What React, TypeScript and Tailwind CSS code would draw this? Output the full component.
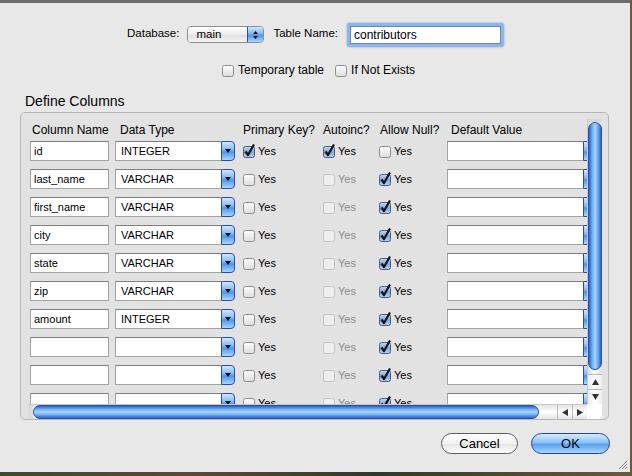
import React from "react";

const font = { fontFamily: '"Liberation Sans", Arial, sans-serif' };

type Row = {
  name: string;
  type: string;
  pk: boolean;
  ai: boolean;
  aiEnabled: boolean;
  nul: boolean;
};

const rows: Row[] = [
  { name: "id", type: "INTEGER", pk: true, ai: true, aiEnabled: true, nul: false },
  { name: "last_name", type: "VARCHAR", pk: false, ai: false, aiEnabled: false, nul: true },
  { name: "first_name", type: "VARCHAR", pk: false, ai: false, aiEnabled: false, nul: true },
  { name: "city", type: "VARCHAR", pk: false, ai: false, aiEnabled: false, nul: true },
  { name: "state", type: "VARCHAR", pk: false, ai: false, aiEnabled: false, nul: true },
  { name: "zip", type: "VARCHAR", pk: false, ai: false, aiEnabled: false, nul: true },
  { name: "amount", type: "INTEGER", pk: false, ai: false, aiEnabled: false, nul: true },
  { name: "", type: "", pk: false, ai: false, aiEnabled: false, nul: true },
  { name: "", type: "", pk: false, ai: false, aiEnabled: false, nul: true },
  { name: "", type: "", pk: false, ai: false, aiEnabled: false, nul: true },
];

const Check = ({ checked, disabled }: { checked?: boolean; disabled?: boolean }) => (
  <svg width="13" height="14" viewBox="0 0 13 14" className="shrink-0 overflow-visible">
    <defs>
      <linearGradient id="cbOff" x1="0" y1="0" x2="0" y2="1">
        <stop offset="0" stopColor="#ffffff" />
        <stop offset="1" stopColor="#dcdcdc" />
      </linearGradient>
      <linearGradient id="cbOn" x1="0" y1="0" x2="0" y2="1">
        <stop offset="0" stopColor="#c9ddf7" />
        <stop offset="0.5" stopColor="#7ea8e0" />
        <stop offset="1" stopColor="#b6d2f5" />
      </linearGradient>
    </defs>
    <rect
      x="0.5"
      y="2.5"
      width="11"
      height="11"
      rx="2"
      fill={disabled ? "#efefef" : checked ? "url(#cbOn)" : "url(#cbOff)"}
      stroke={disabled ? "#c4c4c4" : checked ? "#4a5f80" : "#8d8d8d"}
    />
    {checked && (
      <path d="M2.5 7.5 L5 11 L11 0.5" fill="none" stroke="#111" strokeWidth="2.2" strokeLinejoin="round" />
    )}
  </svg>
);

const CheckYes = ({ checked, disabled }: { checked?: boolean; disabled?: boolean }) => (
  <div className="flex items-center gap-[2px]">
    <Check checked={checked} disabled={disabled} />
    <span className={`text-[11px] ${disabled ? "text-[#8c8c8c]" : "text-black"}`}>Yes</span>
  </div>
);

const Field = ({ value, width }: { value: string; width: string }) => (
  <div
    className={`${width} h-[20px] bg-white border border-[#a4a4a4] border-t-[#7e7e7e] flex items-center pl-[3px] text-[11px] text-black shrink-0`}
  >
    {value}
  </div>
);

const ComboButton = () => (
  <div className="w-[14px] h-[20px] shrink-0 rounded-r-[4px] border border-[#2a4f9c] bg-[linear-gradient(to_bottom,#d3e7ff,#7db6f4_45%,#4c94ea_55%,#a9d6ff)] flex items-center justify-center">
    <svg width="6" height="4" viewBox="0 0 6 4">
      <path d="M0 0 L6 0 L3 4 Z" fill="#111" />
    </svg>
  </div>
);

const Combo = ({ value }: { value: string }) => (
  <div className="flex shrink-0">
    <div className="w-[106px] h-[20px] bg-white border border-[#a4a4a4] border-t-[#7e7e7e] border-r-0 flex items-center pl-[5px] text-[11px] text-black">
      {value}
    </div>
    <ComboButton />
  </div>
);

const Arrow = ({ dir }: { dir: "up" | "down" | "left" | "right" }) => {
  const d =
    dir === "up"
      ? "M0 6 L7 6 L3.5 0 Z"
      : dir === "down"
      ? "M0 0 L7 0 L3.5 6 Z"
      : dir === "left"
      ? "M6 0 L6 7 L0 3.5 Z"
      : "M0 0 L0 7 L6 3.5 Z";
  const vert = dir === "up" || dir === "down";
  return (
    <svg width={vert ? 7 : 6} height={vert ? 6 : 7} viewBox={vert ? "0 0 7 6" : "0 0 6 7"}>
      <path d={d} fill="#333" />
    </svg>
  );
};

export default function App() {
  return (
    <div className="w-[632px] h-[476px] overflow-hidden bg-[linear-gradient(to_right,#3c4a2c,#5b4a3a_30%,#2f3a26_60%,#6a5a3c)]" style={font}>
      <div className="relative w-[630px] h-[472px] bg-[#e8e8e8] border-t-[3px] border-t-[#6d6d6d] flex flex-col">
        {/* top row */}
        <div className="flex items-center h-[23px] mt-[20px] pl-[127px]">
          <span className="text-[11.5px] text-black -mt-[2px]">Database:</span>
          <div className="ml-[8px] flex w-[77px] h-[17px] rounded-[4px] border border-[#8f8f8f] overflow-hidden">
            <div className="flex-1 bg-[linear-gradient(to_bottom,#ffffff,#ececec_50%,#dedede_51%,#f4f4f4)] flex items-center pl-[8px] text-[11.5px] text-black">
              main
            </div>
            <div className="w-[16px] border-l border-[#2a4f9c] bg-[linear-gradient(to_bottom,#d3e7ff,#7db6f4_45%,#4c94ea_55%,#a9d6ff)] flex flex-col items-center justify-center gap-[2px]">
              <svg width="5" height="3" viewBox="0 0 5 3">
                <path d="M0 3 L5 3 L2.5 0 Z" fill="#111" />
              </svg>
              <svg width="5" height="3" viewBox="0 0 5 3">
                <path d="M0 0 L5 0 L2.5 3 Z" fill="#111" />
              </svg>
            </div>
          </div>
          <span className="ml-[9px] text-[11.5px] text-black -mt-[2px]">Table Name:</span>
          <div className="ml-[9px] w-[157px] h-[24px] rounded-[3px] bg-[#8db6ec] p-[3px] shadow-[0_0_2px_#6d9ee0]">
            <div className="w-full h-full bg-white border border-[#6f87a8] flex items-center pl-[3px] text-[12px] text-black">
              contributors
            </div>
          </div>
        </div>

        {/* options row */}
        <div className="flex items-center h-[14px] mt-[17px] pl-[222px] gap-[3px]">
          <Check />
          <span className="text-[12px] text-black">Temporary table</span>
          <span className="w-[5px]" />
          <Check />
          <span className="text-[12px] text-black">If Not Exists</span>
        </div>

        <div className="mt-[16px] pl-[25px] h-[17px] leading-[17px] text-[14px] text-black">Define Columns</div>

        {/* group box */}
        <div className="mt-[2px] ml-[20px] w-[589px] h-[308px] border border-[#b7b7b7] rounded-[5px] bg-[#e2e2e2] pt-[6px] pl-[7px]">
          <div className="w-[574px] h-[300px] flex flex-col">
            <div className="flex h-[285px]">
              <div className="w-[559px] h-[285px] overflow-hidden shrink-0">
                <div className="flex h-[22px] pt-[2px] text-[12px] text-black whitespace-nowrap">
                  <div className="w-[89px] pl-[4px] shrink-0">Column Name</div>
                  <div className="w-[126px] pl-[3px] shrink-0">Data Type</div>
                  <div className="w-[80px] shrink-0">Primary Key?</div>
                  <div className="w-[57px] shrink-0">Autoinc?</div>
                  <div className="w-[71px] shrink-0">Allow Null?</div>
                  <div className="shrink-0">Default Value</div>
                </div>
                {rows.map((r, i) => (
                  <div key={i} className="flex h-[28px] pl-[2px] whitespace-nowrap">
                    <div className="w-[85px] h-[20px] shrink-0">
                      <Field value={r.name} width="w-[79px]" />
                    </div>
                    <div className="w-[128px] h-[20px] shrink-0">
                      <Combo value={r.type} />
                    </div>
                    <div className="w-[80px] h-[20px] flex items-center shrink-0">
                      <CheckYes checked={r.pk} />
                    </div>
                    <div className="w-[56px] h-[20px] flex items-center shrink-0">
                      <CheckYes checked={r.ai} disabled={!r.aiEnabled} />
                    </div>
                    <div className="w-[68px] h-[20px] flex items-center shrink-0">
                      <CheckYes checked={r.nul} />
                    </div>
                    <div className="flex h-[20px] shrink-0">
                      <div className="w-[136px] h-[20px] bg-white border border-[#a4a4a4] border-t-[#7e7e7e] border-r-0" />
                      <ComboButton />
                    </div>
                  </div>
                ))}
              </div>
              {/* vertical scroller */}
              <div className="w-[15px] h-[285px] flex flex-col bg-[#f4f4f4] border-l border-[#c9c9c9] shrink-0">
                <div className="flex-1 flex flex-col bg-[linear-gradient(to_right,#e4e4e4,#ffffff_50%,#e4e4e4)]">
                  <div className="h-[3px] bg-[#d8d8d8]" />
                  <div className="h-[248px] rounded-[7px] border border-[#2450a8] bg-[linear-gradient(to_right,#2d63c8,#6aa8f0_25%,#a9d6ff_50%,#6aa8f0_75%,#2d63c8)]" />
                  <div className="flex-1 rounded-b-[7px] bg-[linear-gradient(to_right,#dcdcdc,#ffffff_50%,#dcdcdc)]" />
                </div>
                <div className="h-[15px] flex items-center justify-center border-t border-[#b9b9b9] bg-[linear-gradient(to_right,#ececec,#ffffff_50%,#ececec)]">
                  <Arrow dir="up" />
                </div>
                <div className="h-[15px] flex items-center justify-center border-t border-[#b9b9b9] bg-[linear-gradient(to_right,#ececec,#ffffff_50%,#ececec)]">
                  <Arrow dir="down" />
                </div>
              </div>
            </div>
            {/* horizontal scroller */}
            <div className="flex h-[15px]">
              <div className="w-[559px] h-[15px] flex border-t border-[#c9c9c9] bg-[linear-gradient(to_bottom,#e4e4e4,#ffffff_50%,#e4e4e4)] shrink-0">
                <div className="w-[5px] bg-[#dcdcdc]" />
                <div className="w-[506px] h-[14px] rounded-[7px] border border-[#2450a8] bg-[linear-gradient(to_bottom,#2d63c8,#6aa8f0_25%,#a9d6ff_50%,#6aa8f0_75%,#2d63c8)]" />
                <div className="flex-1" />
                <div className="w-[15px] flex items-center justify-center border-l border-[#b9b9b9]">
                  <Arrow dir="left" />
                </div>
                <div className="w-[15px] flex items-center justify-center border-l border-[#b9b9b9]">
                  <Arrow dir="right" />
                </div>
              </div>
              <div className="w-[15px] h-[15px] bg-white shrink-0" />
            </div>
          </div>
        </div>

        {/* buttons */}
        <div className="flex justify-end mt-[13px] pr-[20px] gap-[13px]">
          <button className="w-[77px] h-[21px] rounded-full border border-[#5e5e5e] bg-[linear-gradient(to_bottom,#ffffff,#f2f2f2_50%,#e2e2e2_51%,#ffffff)] text-[13px] text-black leading-none">
            Cancel
          </button>
          <button className="w-[79px] h-[21px] rounded-full border border-[#27439a] bg-[linear-gradient(to_bottom,#d6ebff,#8cc2fa_45%,#5aa0ee_55%,#a8d8ff)] text-[13px] text-black leading-none">
            OK
          </button>
        </div>

        {/* resize grip */}
        <svg className="absolute right-[2px] bottom-[2px]" width="11" height="11" viewBox="0 0 11 11">
          <path d="M10 2 L2 10 M10 5 L5 10 M10 8 L8 10" stroke="#8a8a8a" strokeWidth="1" />
        </svg>
      </div>
    </div>
  );
}
